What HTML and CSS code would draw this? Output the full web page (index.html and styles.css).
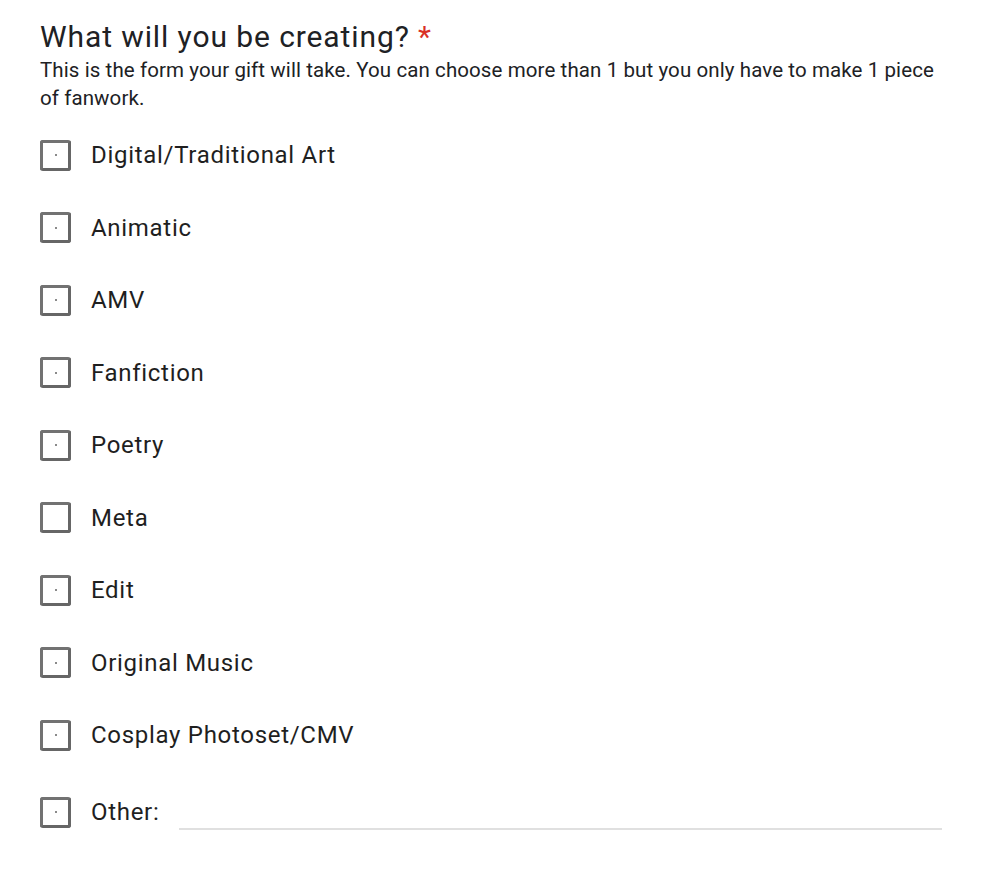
FILE: index.html
```html
<!DOCTYPE html>
<html>
<head>
<meta charset="utf-8">
<link rel="stylesheet" href="styles.css">
</head>
<body>
<div class="question">
  <h1 class="title">What will you be creating? <span class="req">*</span></h1>
  <p class="desc">This is the form your gift will take. You can choose more than 1 but you only have to make 1 piece of fanwork.</p>
  <ul class="options">
    <li class="option"><span class="box dot"></span><span class="label">Digital/Traditional Art</span></li>
    <li class="option"><span class="box dot"></span><span class="label">Animatic</span></li>
    <li class="option"><span class="box dot"></span><span class="label">AMV</span></li>
    <li class="option"><span class="box dot"></span><span class="label">Fanfiction</span></li>
    <li class="option"><span class="box dot"></span><span class="label">Poetry</span></li>
    <li class="option"><span class="box"></span><span class="label">Meta</span></li>
    <li class="option"><span class="box dot"></span><span class="label">Edit</span></li>
    <li class="option"><span class="box dot"></span><span class="label">Original Music</span></li>
    <li class="option"><span class="box dot"></span><span class="label">Cosplay Photoset/CMV</span></li>
    <li class="option other"><span class="box dot"></span><span class="label">Other:</span><span class="line"></span></li>
  </ul>
</div>
</body>
</html>
```
FILE: styles.css
```css
html, body {
  margin: 0;
  padding: 0;
  background: #ffffff;
}
body {
  font-family: Roboto, "Noto Sans", sans-serif;
  color: #202124;
}
.question {
  padding: 19px 46px 0 40px;
}
.title {
  margin: 0;
  font-size: 30px;
  font-weight: 400;
  line-height: 36px;
  letter-spacing: 0.9px;
  color: #202124;
}
.req {
  color: #d93025;
}
.desc {
  margin: 1px 0 0 0;
  font-size: 20.5px;
  line-height: 28px;
  letter-spacing: 0.1px;
  color: #202124;
}
.options {
  list-style: none;
  margin: 7px 0 0 0;
  padding: 0;
}
.option {
  display: flex;
  align-items: center;
  height: 72.5px;
  gap: 20px;
}
.other {
  margin-top: 4.5px;
}
.box {
  position: relative;
  box-sizing: border-box;
  width: 31px;
  height: 31px;
  border: 3px solid #727272;
  border-right-color: #666666;
  border-bottom-color: #666666;
  border-radius: 3px;
  flex: none;
}
.dot::after {
  content: "";
  position: absolute;
  left: 50%;
  top: 50%;
  width: 2px;
  height: 2px;
  margin: -1px 0 0 -1px;
  background: #8a8a8a;
}
.label {
  font-size: 24px;
  line-height: 30px;
  letter-spacing: 0.7px;
  color: #1f1f1f;
}
.line {
  flex: 1;
  align-self: flex-end;
  margin: 0 0 19px 0;
  height: 2px;
  background: #e0e0e0;
}
```
